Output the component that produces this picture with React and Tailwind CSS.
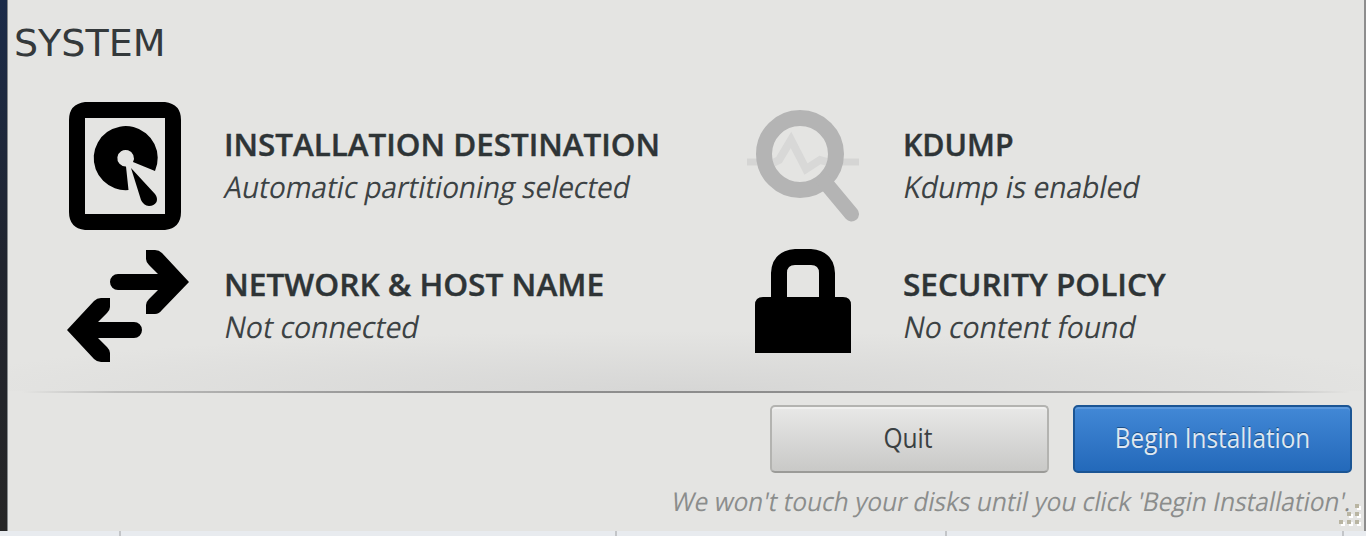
import React from "react";

function DiskIcon() {
  return (
    <svg viewBox="0 0 112 128" className="block h-[128px] w-[112px]">
      <path
        fillRule="evenodd"
        d="M16 0H96Q112 2 112 18V110Q112 126 96 128H16Q0 126 0 110V18Q0 2 16 0ZM16 16V112H96V16Z"
        fill="#000"
      />
      <path
        fillRule="evenodd"
        d="M59.5 88A32 32 0 1 1 86 69L64 60A8.300 8.300 0 1 0 57 64.500ZM62 66L86 92Q89 96 87.500 100Q85 104 80 104Q74.500 103.500 72 98Z"
        fill="#000"
      />
    </svg>
  );
}

function NetworkIcon() {
  return (
    <svg viewBox="0 0 122 112" className="block h-[112px] w-[122px]" fill="#000">
      <path d="M79 0H88Q92 0 95 3L122 32L95 60Q92 64 88 64H79V55Q79 52 82 49L91 40H51A8 8 0 0 1 51 24H91L82 15Q79 12 79 9Z" />
      <path d="M43 48H34Q30 48 27 51L0 80L27 109Q30 112 34 112H43V103Q43 100 40 97L31 88H67A8 8 0 0 0 67 72H31L40 63Q43 60 43 57Z" />
    </svg>
  );
}

function KdumpIcon() {
  return (
    <svg viewBox="0 0 112 113" className="block h-[113px] w-[112px]" fill="none">
      <path d="M0 52H12M92 52H112" stroke="#d5d5d4" strokeWidth="7" />
      <path d="M24 54L32 50L44 30L59 59L73 50L84 53" stroke="#d8d8d7" strokeWidth="8" />
      <circle cx="53" cy="44" r="36" stroke="#b4b4b4" strokeWidth="16" />
      <path d="M77 71L104.500 104" stroke="#b4b4b4" strokeWidth="15" strokeLinecap="round" />
    </svg>
  );
}

function LockIcon() {
  return (
    <svg viewBox="0 0 96 104" className="block h-[104px] w-[96px]">
      <path
        fillRule="evenodd"
        d="M16 48V24Q17 2 40 0H56Q79 2 80 24V48H88Q96 48 96 56V104H0V56Q0 48 8 48ZM32 48H64V24Q64 16 56 16H40Q32 16 32 24Z"
        fill="#000"
      />
    </svg>
  );
}

function Spoke({ icon, title, status, iconClass, titleClass, statusClass }) {
  return (
    <div className="flex">
      <div className={iconClass}>{icon}</div>
      <div className="whitespace-nowrap pt-[24px] text-[30px] text-[#2e3436]">
        <h2 className="-ml-px h-[42px] leading-[42px]">
          <span className={`inline-block origin-left font-semibold [-webkit-text-stroke:0.4px_#2e3436] ${titleClass}`}>{title}</span>
        </h2>
        <p className="-ml-[4px] h-[42px] leading-[42px] text-[#3c4244]">
          <span className={`inline-block origin-bottom-left ${statusClass}`}>{status}</span>
        </p>
      </div>
    </div>
  );
}

function Grip() {
  return (
    <svg viewBox="0 0 24 24" className="absolute bottom-[4px] right-[2px] h-[24px] w-[24px]">
      {[[17, 1], [9, 9], [17, 9], [1, 17], [9, 17], [17, 17]].map(([x, y]) => (
        <g key={`${x}-${y}`}>
          <rect x={x + 2} y={y + 2} width="4" height="4" fill="#fff" />
          <rect x={x} y={y} width="4" height="4" fill="#b9b5a2" />
        </g>
      ))}
    </svg>
  );
}

export default function App() {
  return (
    <div className="flex h-[536px] w-[1366px] flex-col overflow-hidden bg-[#e8ebef] font-['Open_Sans','Noto_Sans',sans-serif]">
      <div className="flex h-[531px]">
        <div className="w-[8px] shrink-0 border-r border-[#85898b] bg-linear-to-b from-[#1b2b49] via-[#20242e] to-[#262626]" />
        <div className="relative flex w-[1356px] shrink-0 flex-col bg-[#e4e4e2]">
          <div className="h-[391px] bg-[radial-gradient(ellipse_760px_60px_at_50%_100%,#d6d6d5,#e4e4e200)]">
            <h1 className="h-[84px] whitespace-nowrap pl-[6px] pt-[18px] font-['DejaVu_Sans'] text-[38px] leading-[50px] text-[#34393b]">
              SYSTEM
            </h1>
            <div className="grid h-[280px] grid-cols-[679px_1fr] grid-rows-[140px_140px] pt-[16px]">
              <Spoke
                icon={<DiskIcon />}
                title="INSTALLATION DESTINATION"
                status="Automatic partitioning selected"
                iconClass="w-[217px] shrink-0 pl-[61px] pt-[2px]"
                titleClass="scale-x-[1.045]"
                statusClass="[transform:scaleX(0.927)_skewX(-12deg)]"
              />
              <Spoke
                icon={<KdumpIcon />}
                title="KDUMP"
                status="Kdump is enabled"
                iconClass="w-[217px] shrink-0 pl-[60px] pt-[10px]"
                titleClass="scale-x-[1.01]"
                statusClass="[transform:scaleX(0.937)_skewX(-12deg)]"
              />
              <Spoke
                icon={<NetworkIcon />}
                title="NETWORK & HOST NAME"
                status="Not connected"
                iconClass="w-[217px] shrink-0 pl-[58.500px] pt-[9.500px]"
                titleClass="scale-x-[1.055]"
                statusClass="[transform:scaleX(0.945)_skewX(-12deg)]"
              />
              <Spoke
                icon={<LockIcon />}
                title="SECURITY POLICY"
                status="No content found"
                iconClass="w-[217px] shrink-0 pl-[68px] pt-[9px]"
                titleClass="scale-x-[1.052]"
                statusClass="[transform:scaleX(0.94)_skewX(-12deg)]"
              />
            </div>
          </div>
          <div className="h-[2px] bg-[linear-gradient(90deg,transparent_1%,#bdbdbc_8%,#929292_30%,#8c8c8c_50%,#929292_70%,#bdbdbc_92%,transparent_99%)]" />
          <div className="flex justify-end gap-[24px] pr-[12px] pt-[12px]">
            <button className="h-[68px] w-[279px] rounded-[5px] border-2 border-[#b3b3b0] border-b-[#9b9b98] bg-linear-to-b from-[#e8e8e7] to-[#c9c9c7] pb-[2px] pr-[4px] text-[27px] text-[#3a4042] shadow-[inset_0_2px_#f0f0ef]">
              <span className="inline-block scale-x-[0.91]">Quit</span>
            </button>
            <button className="h-[68px] w-[279px] whitespace-nowrap rounded-[5px] border-2 border-[#1b5594] bg-linear-to-b from-[#4288d6] to-[#2369ba] pb-[2px] text-[27px] text-[#dfe8f1] shadow-[inset_0_2px_#5b98dc] [text-shadow:0_-1px_#1c4f87]">
              <span className="inline-block scale-x-[0.9]">Begin Installation</span>
            </button>
          </div>
          <p className="flex h-[58px] justify-end whitespace-nowrap pr-[12px] text-[26px] leading-[57px] text-[#8b8d8c]">
            <span className="inline-block origin-right [transform:scaleX(0.94)_skewX(-12deg)]">
              We won't touch your disks until you click 'Begin Installation'.
            </span>
          </p>
          <Grip />
        </div>
        <div className="w-[2px] shrink-0 bg-[#8d8d8d]" />
      </div>
      <div className="flex h-[5px]">
        <div className="w-[121px] shrink-0 border-r-2 border-[#c3c5c8]" />
        <div className="w-[496px] shrink-0 border-r-2 border-[#c3c5c8]" />
        <div className="w-[330px] shrink-0 border-r-2 border-[#c3c5c8]" />
        <div className="w-[397px] shrink-0 border-r-2 border-[#c3c5c8]" />
      </div>
    </div>
  );
}
